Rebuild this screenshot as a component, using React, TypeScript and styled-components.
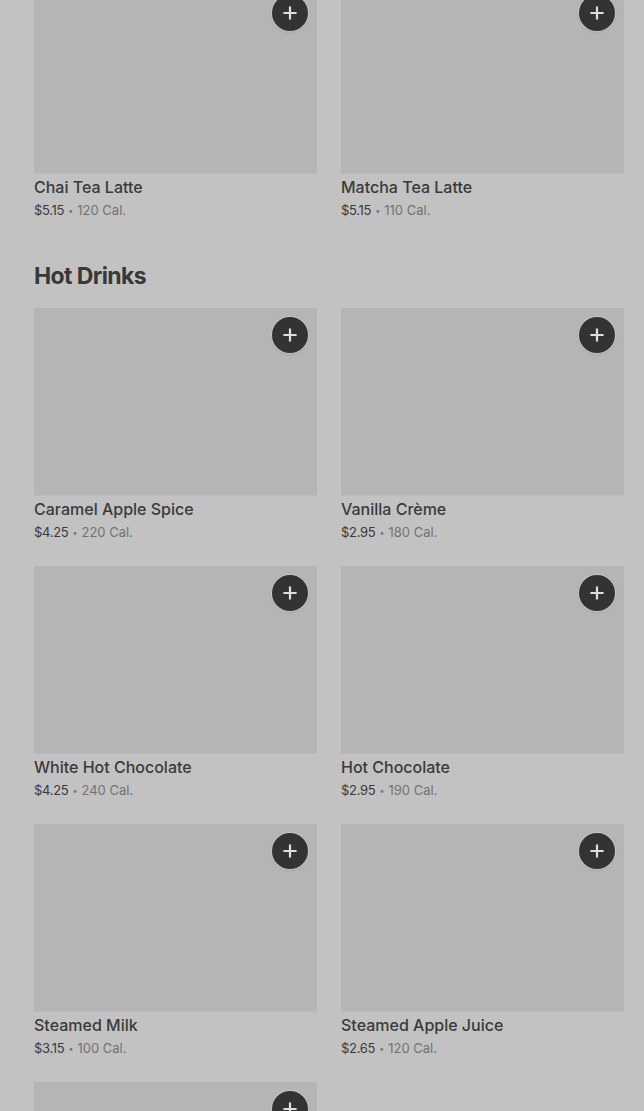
import React from "react";
import styled, { createGlobalStyle } from "styled-components";

const Global = createGlobalStyle`
  html, body { margin: 0; padding: 0; background: #c2c2c2; }
  body { font-family: Inter, "Open Sans", Arial, sans-serif; overflow: hidden; }
`;

const Page = styled.div`
  width: 644px;
  height: 1111px;
  overflow: hidden;
  background: #c2c2c2;
  box-sizing: border-box;
  padding: 0 20px 0 34px;
`;

const Scroller = styled.div`
  margin-top: -14px;
  display: flex;
  flex-direction: column;
`;

const Section = styled.section`
  display: flex;
  flex-direction: column;
`;

const Heading = styled.h2`
  margin: 40px 0 16px;
  height: 32px;
  line-height: 32px;
  font-size: 23px;
  font-weight: 700;
  letter-spacing: -0.6px;
  color: #383838;
`;

const Grid = styled.div`
  display: grid;
  grid-template-columns: 283px 283px;
  column-gap: 24px;
  row-gap: 24px;
`;

const Card = styled.div`
  display: flex;
  flex-direction: column;
`;

const Thumb = styled.div`
  position: relative;
  height: 188px;
  background: #b5b5b5;
  border-bottom: 1px solid #bcbcbc;
  box-sizing: border-box;
`;

const AddButton = styled.button`
  position: absolute;
  top: 9px;
  right: 9px;
  width: 36px;
  height: 36px;
  border-radius: 50%;
  border: none;
  padding: 0;
  background: #333333;
  box-shadow: 0 0 0 1px rgba(215, 215, 215, 0.55), 0 1px 3px rgba(0, 0, 0, 0.12);
  display: flex;
  align-items: center;
  justify-content: center;
  cursor: pointer;
`;

const Title = styled.div`
  margin-top: 3px;
  height: 20px;
  line-height: 20px;
  font-size: 16px;
  font-weight: 500;
  color: #3a3a3a;
  white-space: nowrap;
`;

const Meta = styled.div`
  margin-top: 3px;
  height: 20px;
  line-height: 20px;
  font-size: 13px;
  color: #727272;
  white-space: nowrap;
`;

const Price = styled.span`
  color: #3a3a3a;
  letter-spacing: -0.3px;
`;

const Dot = styled.span`
  display: inline-block;
  font-size: 9px;
  margin: 0 4px;
  vertical-align: 1px;
  color: #777;
`;

const Plus = () => (
  <svg width="14" height="14" viewBox="0 0 14 14" aria-hidden>
    <path d="M7 1.5v11M1.5 7h11" stroke="#dedede" strokeWidth="2.2" strokeLinecap="square" />
  </svg>
);

type Item = { name: string; price?: string; cal?: string };

const ItemCard = ({ item }: { item: Item }) => (
  <Card>
    <Thumb>
      <AddButton aria-label={`Add ${item.name}`}>
        <Plus />
      </AddButton>
    </Thumb>
    {item.price && (
      <>
        <Title>{item.name}</Title>
        <Meta>
          <Price>{item.price}</Price>
          <Dot>•</Dot>
          {item.cal} Cal.
        </Meta>
      </>
    )}
  </Card>
);

const teas: Item[] = [
  { name: "Chai Tea Latte", price: "$5.15", cal: "120" },
  { name: "Matcha Tea Latte", price: "$5.15", cal: "110" },
];

const hot: Item[] = [
  { name: "Caramel Apple Spice", price: "$4.25", cal: "220" },
  { name: "Vanilla Crème", price: "$2.95", cal: "180" },
  { name: "White Hot Chocolate", price: "$4.25", cal: "240" },
  { name: "Hot Chocolate", price: "$2.95", cal: "190" },
  { name: "Steamed Milk", price: "$3.15", cal: "100" },
  { name: "Steamed Apple Juice", price: "$2.65", cal: "120" },
  { name: "More" },
];

export default function App() {
  return (
    <>
      <Global />
      <Page>
        <Scroller>
          <Section>
            <Grid>
              {teas.map((t) => (
                <ItemCard key={t.name} item={t} />
              ))}
            </Grid>
          </Section>
          <Section>
            <Heading>Hot Drinks</Heading>
            <Grid>
              {hot.map((t) => (
                <ItemCard key={t.name} item={t} />
              ))}
            </Grid>
          </Section>
        </Scroller>
      </Page>
    </>
  );
}
